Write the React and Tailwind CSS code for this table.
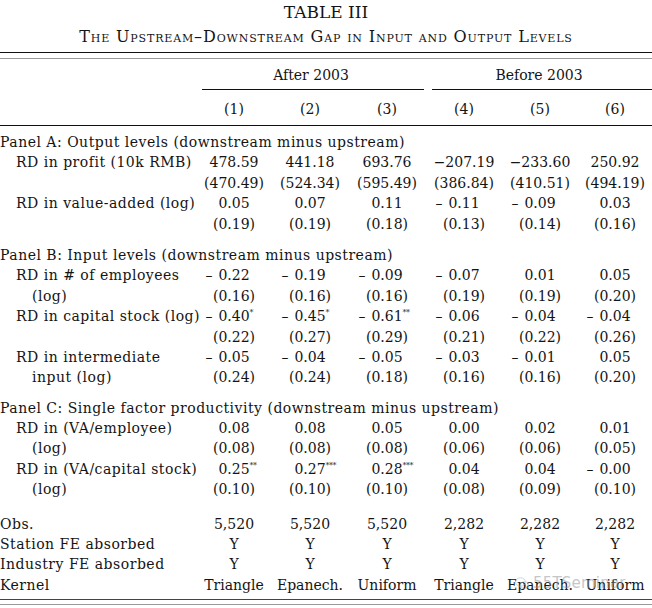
import React from "react";

const GRID = "grid grid-cols-[196px_76px_76px_78px_76px_76px_74px]";

function V({ t, neg, s }) {
  return (
    <div className="flex justify-center">
      <span className="relative inline-block whitespace-nowrap leading-[20.4px]">
        {neg && <span className="absolute right-full top-0 pr-[6px]">–</span>}
        {t}
        {s && (
          <span className="absolute left-full top-[3px] text-[8px] leading-[8px] tracking-[-0.5px]">{s}</span>
        )}
      </span>
    </div>
  );
}

function parse(x) {
  let neg = false;
  let s = null;
  let t = x;
  if (t.startsWith("-")) {
    neg = true;
    t = t.slice(1);
  }
  const m = t.match(/^(.*?)(\*+)$/);
  if (m) {
    t = m[1];
    s = m[2];
  }
  return { t, neg, s };
}

function Row({ label, indent = 1, vals }) {
  const pad = indent === 0 ? "pl-0" : indent === 1 ? "pl-[16px]" : "pl-[32px]";
  return (
    <div className={`${GRID} h-[20.4px] leading-[20.4px]`}>
      <div className={`${pad} whitespace-nowrap tracking-[0.5px]`}>{label}</div>
      {vals.map((v, i) => {
        const p = parse(v);
        return <V key={i} t={p.t} neg={p.neg} s={p.s} />;
      })}
    </div>
  );
}

function Panel({ title }) {
  return <div className="h-[20.4px] leading-[20.4px] whitespace-nowrap tracking-[0.5px]">{title}</div>;
}

export default function App() {
  return (
    <div className="relative w-[652px] h-[608px] overflow-hidden bg-white text-[#141414] font-['DejaVu_Serif',serif] text-[14px]">
      <div className="text-center text-[17px] leading-[20px] pt-[2px]">TABLE III</div>
      <div className="text-center text-[16px] leading-[20px] mt-[5px] tracking-[0.85px] [font-variant:small-caps]">
        The Upstream–Downstream Gap in Input and Output Levels
      </div>
      <div className="mt-[5px] border-t border-[#111]" />
      <div className="mt-[5px] border-t border-[#9a9a9a]" />

      <div className={`${GRID} mt-[6px] h-[20px] leading-[20px]`}>
        <div />
        <div className="col-span-3 text-center">After 2003</div>
        <div className="col-span-3 text-center">Before 2003</div>
      </div>
      <div className={`${GRID} mt-[4px]`}>
        <div />
        <div className="col-span-3 ml-[6px] mr-[2px] border-t border-[#111]" />
        <div className="col-span-3 ml-[6px] border-t border-[#111]" />
      </div>
      <div className={`${GRID} mt-[9px] h-[20px] leading-[20px]`}>
        <div />
        {["(1)", "(2)", "(3)", "(4)", "(5)", "(6)"].map((c) => (
          <div key={c} className="text-center">{c}</div>
        ))}
      </div>
      <div className="mt-[6px] border-t border-[#111]" />

      <div className="mt-[6px]">
        <Panel title="Panel A: Output levels (downstream minus upstream)" />
        <Row label="RD in profit (10k RMB)" vals={["478.59", "441.18", "693.76", "−207.19", "−233.60", "250.92"]} />
        <Row label="" vals={["(470.49)", "(524.34)", "(595.49)", "(386.84)", "(410.51)", "(494.19)"]} />
        <Row label="RD in value-added (log)" vals={["0.05", "0.07", "0.11", "-0.11", "-0.09", "0.03"]} />
        <Row label="" vals={["(0.19)", "(0.19)", "(0.18)", "(0.13)", "(0.14)", "(0.16)"]} />
      </div>

      <div className="mt-[11px]">
        <Panel title="Panel B: Input levels (downstream minus upstream)" />
        <Row label="RD in # of employees" vals={["-0.22", "-0.19", "-0.09", "-0.07", "0.01", "0.05"]} />
        <Row label="(log)" indent={2} vals={["(0.16)", "(0.16)", "(0.16)", "(0.19)", "(0.19)", "(0.20)"]} />
        <Row label="RD in capital stock (log)" vals={["-0.40*", "-0.45*", "-0.61**", "-0.06", "-0.04", "-0.04"]} />
        <Row label="" vals={["(0.22)", "(0.27)", "(0.29)", "(0.21)", "(0.22)", "(0.26)"]} />
        <Row label="RD in intermediate" vals={["-0.05", "-0.04", "-0.05", "-0.03", "-0.01", "0.05"]} />
        <Row label="input (log)" indent={2} vals={["(0.24)", "(0.24)", "(0.18)", "(0.16)", "(0.16)", "(0.20)"]} />
      </div>

      <div className="mt-[10px]">
        <Panel title="Panel C: Single factor productivity (downstream minus upstream)" />
        <Row label="RD in (VA/employee)" vals={["0.08", "0.08", "0.05", "0.00", "0.02", "0.01"]} />
        <Row label="(log)" indent={2} vals={["(0.08)", "(0.08)", "(0.08)", "(0.06)", "(0.06)", "(0.05)"]} />
        <Row label="RD in (VA/capital stock)" vals={["0.25**", "0.27***", "0.28***", "0.04", "0.04", "-0.00"]} />
        <Row label="(log)" indent={2} vals={["(0.10)", "(0.10)", "(0.10)", "(0.08)", "(0.09)", "(0.10)"]} />
      </div>

      <div className="mt-[14px]">
        <Row label="Obs." indent={0} vals={["5,520", "5,520", "5,520", "2,282", "2,282", "2,282"]} />
        <Row label="Station FE absorbed" indent={0} vals={["Y", "Y", "Y", "Y", "Y", "Y"]} />
        <Row label="Industry FE absorbed" indent={0} vals={["Y", "Y", "Y", "Y", "Y", "Y"]} />
        <Row label="Kernel" indent={0} vals={["Triangle", "Epanech.", "Uniform", "Triangle", "Epanech.", "Uniform"]} />
      </div>
      <div className="mt-[4px] border-t border-[#444]" />
      <div className="mt-[4px] border-t border-[#9a9a9a]" />

      <div className="absolute left-[515px] top-[572px] flex items-center gap-[4px] opacity-50 pointer-events-none">
        <svg width="14" height="13" viewBox="0 0 14 13">
          <ellipse cx="5.5" cy="5" rx="5" ry="4.2" fill="none" stroke="#aab" strokeWidth="1" />
          <ellipse cx="9.5" cy="8" rx="4" ry="3.4" fill="none" stroke="#aab" strokeWidth="1" />
        </svg>
        <span className="text-[15px] text-[#8a8f99] font-['DejaVu_Sans',sans-serif] tracking-[0.2px]">55TSeminar</span>
      </div>
    </div>
  );
}
